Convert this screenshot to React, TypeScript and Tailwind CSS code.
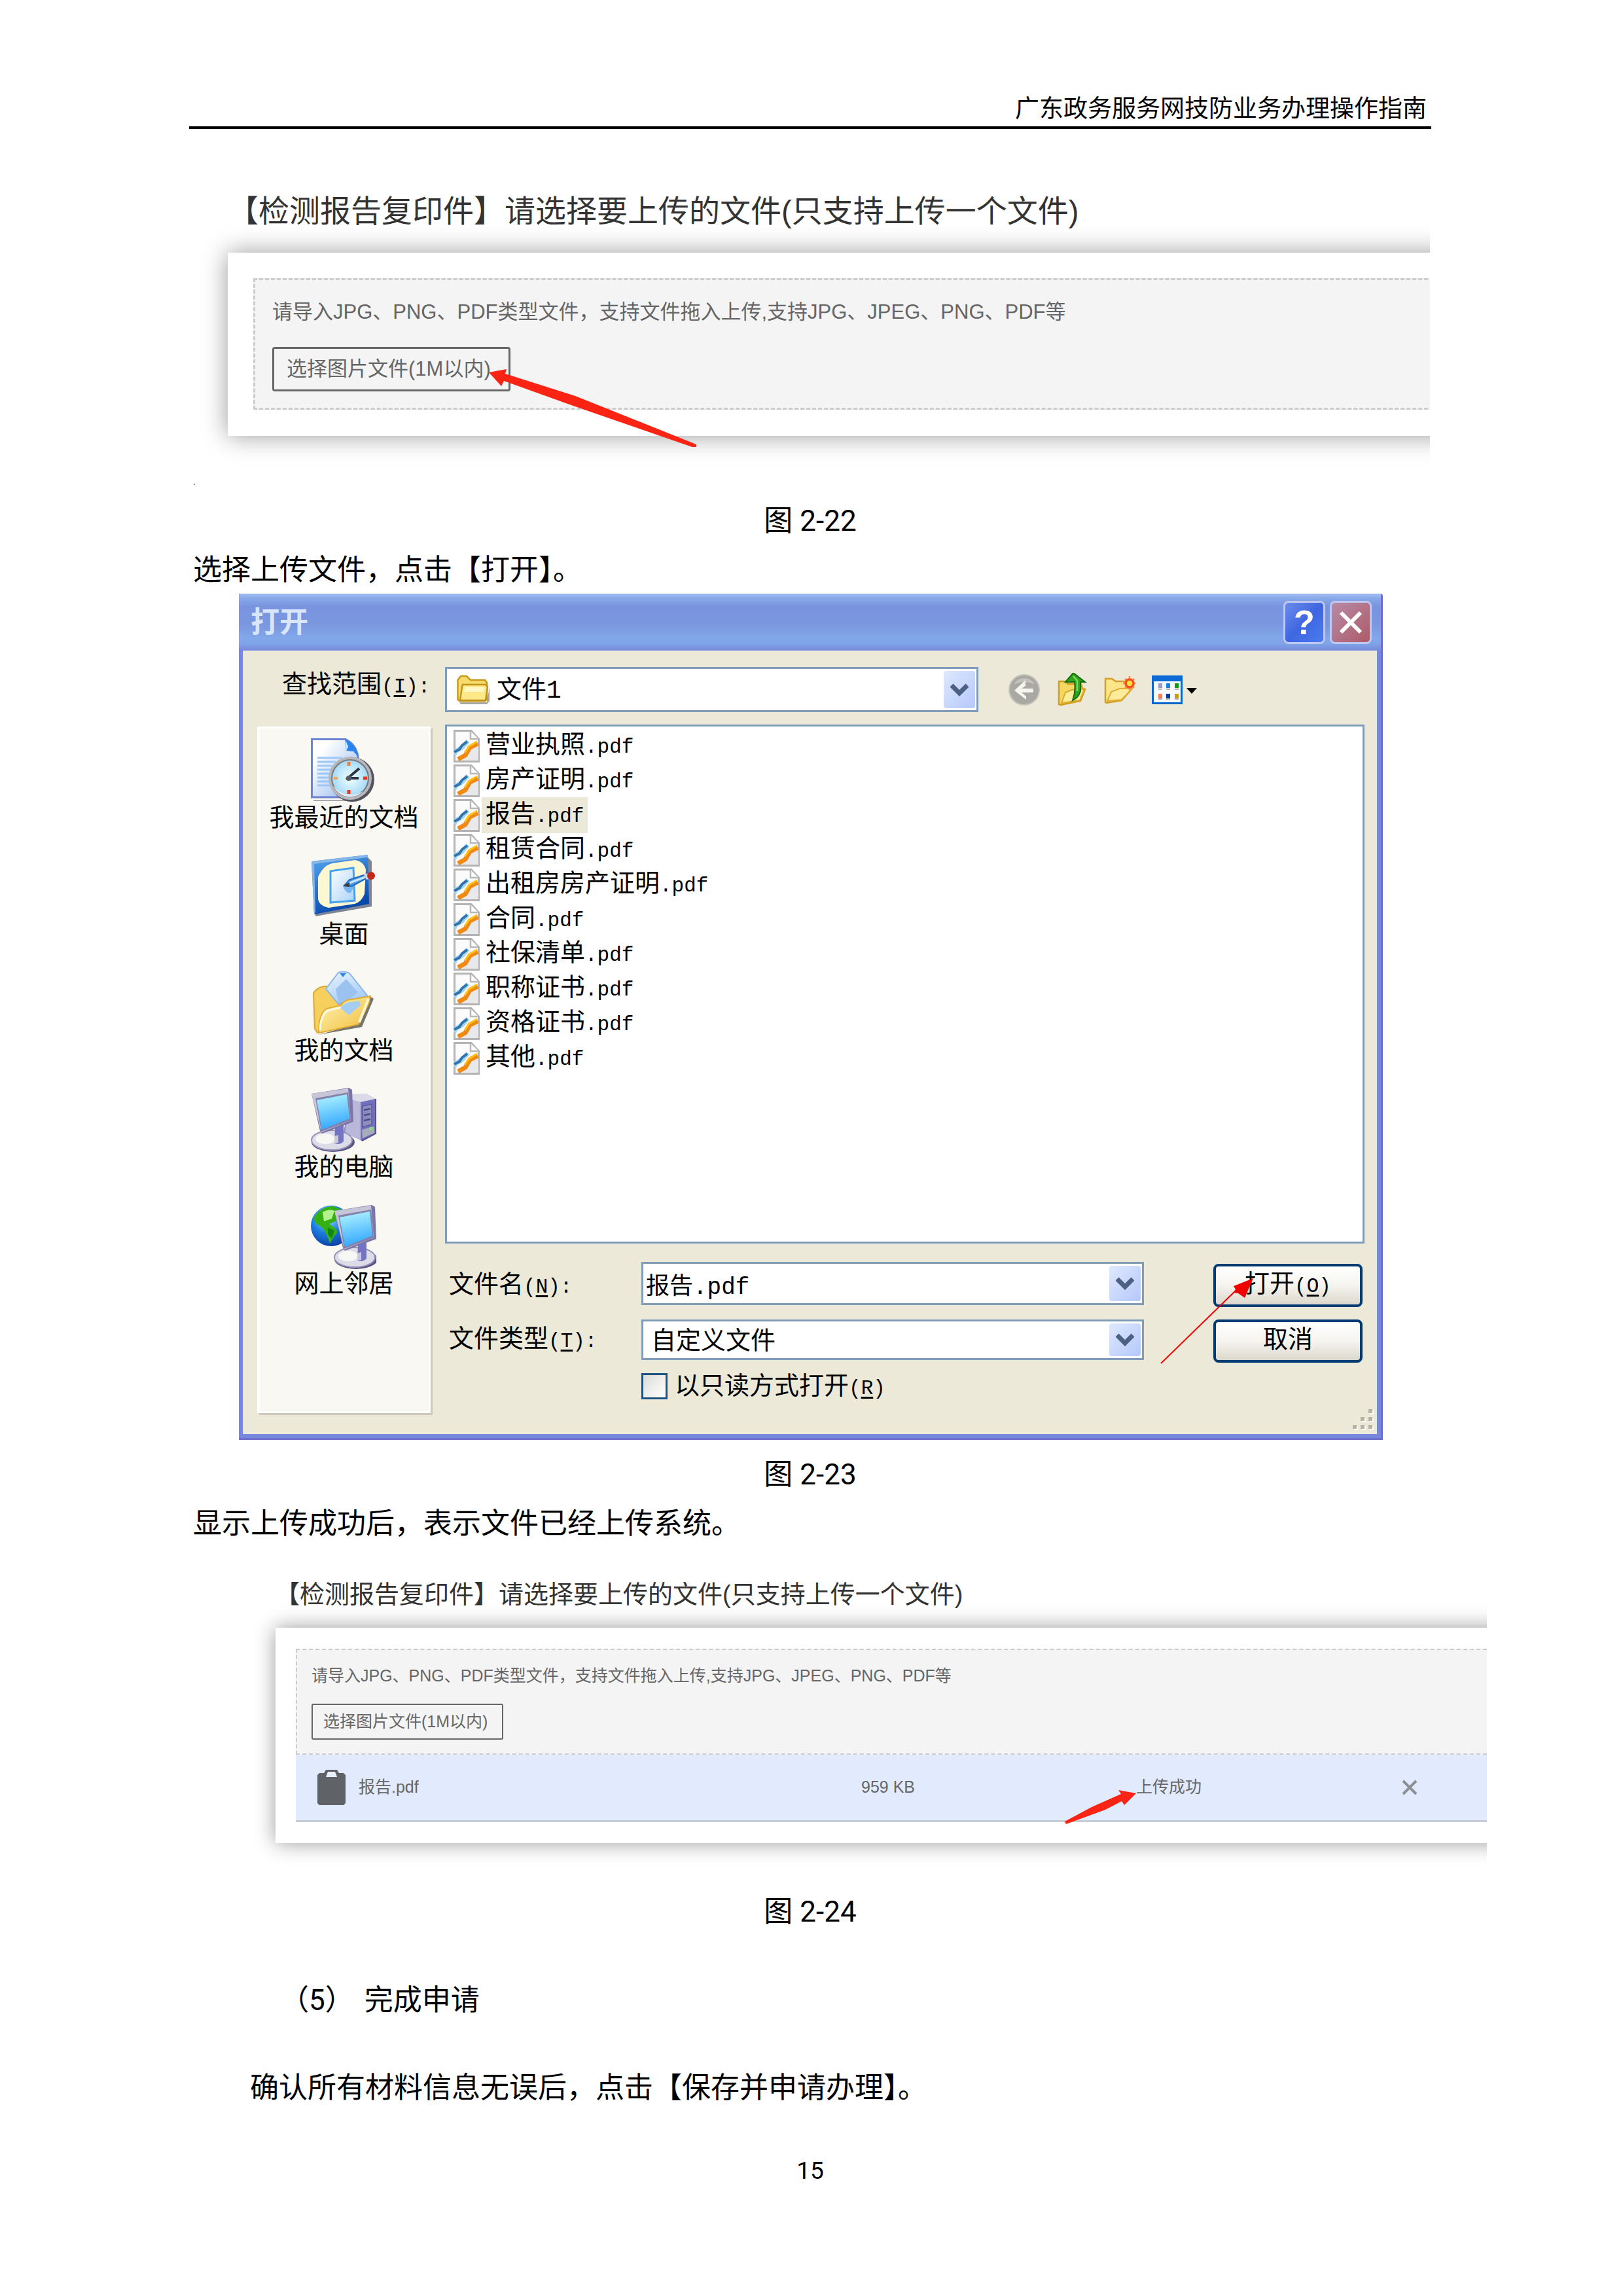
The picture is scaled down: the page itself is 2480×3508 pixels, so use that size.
import type { ReactNode } from "react";

const FILES = ["营业执照", "房产证明", "报告", "租赁合同", "出租房房产证明", "合同", "社保清单", "职称证书", "资格证书", "其他"];

function PdfIcon() {
  return (
    <svg viewBox="0 0 40 50" className="h-[50px] w-[40px] shrink-0" aria-hidden="true">
      <path d="M1.5 1.5H27L38.5 14V48.5H1.5Z" fill="#fbfbfb" stroke="#b3b3b3" strokeWidth="3" />
      <path d="M6 44L38 22V47H6Z" fill="#e9e9ec" />
      <path d="M26 2V14H38" fill="#fff" stroke="#b8b8b8" strokeWidth="2.5" />
      <path d="M1 38L3 33L13 27L22 17" fill="none" stroke="#a8d4ee" strokeWidth="7" />
      <path d="M1 34L9 30L13 24L21 18" fill="none" stroke="#2f74ad" strokeWidth="4" />
      <path d="M7 45L18 39L25 27L37 21" fill="none" stroke="#f08a12" strokeWidth="7" />
      <path d="M17 35L24 25L36 18" fill="none" stroke="#fcc21a" strokeWidth="3" />
    </svg>
  );
}

function RecentIcon() {
  return (
    <svg viewBox="0 0 100 100" className="size-[100px]" aria-hidden="true">
      <defs>
        <linearGradient id="rdoc" x1="0" y1="0" x2="1" y2="1">
          <stop offset="0.2" stopColor="#ffffff" />
          <stop offset="1" stopColor="#8fb4ee" />
        </linearGradient>
        <radialGradient id="rface">
          <stop offset="0" stopColor="#f4ffff" />
          <stop offset="1" stopColor="#a6dbf7" />
        </radialGradient>
      </defs>
      <path d="M4 94H60L76 60V34L70 96H4Z" fill="#a9a9ad" />
      <path d="M1.5 1.5H53Q69 9 72 28V90H1.5Z" fill="url(#rdoc)" stroke="#6c84cf" strokeWidth="3" />
      <path d="M52 1Q69 8 73 29L65 20L54 19Z" fill="#2a84ee" />
      <path d="M53 3L57 13L54 19Z" fill="#d8ecff" />
      <path d="M10 30H48M10 36H38M10 42H33M10 48H30M10 54H28M10 60H28M10 66H29M10 72H32" stroke="#9cc8f8" strokeWidth="3" />
      <circle cx="63" cy="63" r="34" fill="#55545c" />
      <circle cx="60" cy="61" r="33" fill="#b6b6bd" />
      <circle cx="60" cy="61" r="29" fill="#77777f" />
      <circle cx="60" cy="61" r="27" fill="url(#rface)" />
      <path d="M34 72A28 28 0 0 0 80 81A34 34 0 0 1 34 72" fill="#e8eaf2" />
      <path d="M58 36V42" stroke="#f0803c" strokeWidth="5" />
      <path d="M35 61H41" stroke="#f2a25c" strokeWidth="4" />
      <path d="M80 61H86M58 79V85" stroke="#ea3c1c" strokeWidth="5" />
      <path d="M54 63L74 46M58 61H73" stroke="#2c3440" strokeWidth="4" />
      <circle cx="58" cy="61" r="4" fill="#555b66" />
    </svg>
  );
}

function DesktopIcon() {
  return (
    <svg viewBox="0 0 100 100" className="size-[100px]" aria-hidden="true">
      <defs>
        <linearGradient id="dblue" x1="0" y1="0" x2="0.4" y2="1">
          <stop offset="0" stopColor="#58a9f0" />
          <stop offset="1" stopColor="#0748ad" />
        </linearGradient>
        <linearGradient id="dpap" x1="0" y1="0" x2="1" y2="1">
          <stop offset="0" stopColor="#ffffff" />
          <stop offset="1" stopColor="#a9d2fa" />
        </linearGradient>
      </defs>
      <path d="M6 94L92 79L92 10L86 4L80 70L6 90Z" fill="#7d8594" />
      <path d="M0 10L86 0L88 75L4 91Z" fill="url(#dblue)" />
      <path d="M0 10L86 0V4L4 14L6 88L4 91Z" fill="#86b6e8" />
      <path d="M10 34Q18 16 32 13L66 8Q80 10 83 23L81 60Q76 72 66 75L26 81Q12 78 10 68Z" fill="#fdf7d2" />
      <path d="M29 25L64 20L66 70L29 73Z" fill="url(#dpap)" stroke="#46a2ea" strokeWidth="3" />
      <path d="M48 47Q52 60 60 58L66 46Z" fill="#74b7f2" />
      <path d="M50 47L58 38L80 31L84 36L62 48Z" fill="#4b9ae6" stroke="#246cc0" strokeWidth="2" />
      <path d="M58 43L82 34" stroke="#c9e6ff" strokeWidth="3" />
      <path d="M48 48L58 42L58 49Z" fill="#433b22" />
      <path d="M80 30L88 28L88 37L84 38Z" fill="#d3d6dc" />
      <circle cx="91" cy="32" r="6" fill="#c3281c" />
    </svg>
  );
}

function DocumentsIcon() {
  return (
    <svg viewBox="0 0 100 100" className="size-[100px]" aria-hidden="true">
      <defs>
        <linearGradient id="fyel" x1="0" y1="0" x2="1" y2="1">
          <stop offset="0" stopColor="#fff4b4" />
          <stop offset="1" stopColor="#f0bd3c" />
        </linearGradient>
        <linearGradient id="fpap" x1="0" y1="0" x2="0.5" y2="1">
          <stop offset="0" stopColor="#eaf5ff" />
          <stop offset="1" stopColor="#a6ccf6" />
        </linearGradient>
      </defs>
      <path d="M12 97L78 85L96 42L90 38L72 80Z" fill="#77746c" />
      <path d="M4 33Q12 22 24 23L44 50L60 46L40 80L10 94L6 88Z" fill="#f6cf5c" stroke="#d9a83c" strokeWidth="2" />
      <path d="M42 2Q50 -1 59 3L87 38L56 44L42 50L23 27Z" fill="url(#fpap)" stroke="#8db6e6" strokeWidth="2" />
      <path d="M44 3L54 3L49 9Z" fill="#2f86e4" />
      <path d="M38 27L54 12L72 32L58 44L42 48Z" fill="#9cc2f0" />
      <path d="M12 94Q12 64 24 57L46 52Q52 43 62 43L91 38L88 50L73 81L13 94Z" fill="url(#fyel)" stroke="#e3ad33" strokeWidth="2" />
      <path d="M14 90Q15 66 26 60L46 55" fill="none" stroke="#fffbe4" strokeWidth="3" />
      <path d="M88 42L74 78" stroke="#fff6cf" strokeWidth="4" />
      <path d="M45 56Q52 47 62 47L74 45L76 52L58 67Z" fill="#a3cdf2" />
    </svg>
  );
}

function Screen() {
  return (
    <g>
      <ellipse cx="34" cy="83" rx="33" ry="15" fill="#5b5685" />
      <ellipse cx="32" cy="80" rx="31" ry="15" fill="#dcdce8" stroke="#9794b8" strokeWidth="2" />
      <ellipse cx="22" cy="78" rx="15" ry="8" fill="#f7f7f4" />
      <path d="M37 60L50 56V82Q44 88 36 85Z" fill="#7573c4" />
      <path d="M36 74L42 72V84L36 85Z" fill="#c9c9e0" />
      <path d="M1 9L58 0L63 3L65 52L17 70L14 66Z" fill="#7a76a8" />
      <path d="M1 9L57 1L61 50L16 68Z" fill="#c6c6d8" />
      <path d="M7 16L57 7L61 50L16 67Z" fill="#8482ad" />
      <path d="M9 19L55 10L59 47L17 64Z" fill="url(#scr)" />
    </g>
  );
}

function ScreenPaint() {
  return (
    <defs>
      <linearGradient id="scr" x1="0.3" y1="0" x2="0.5" y2="1">
        <stop offset="0" stopColor="#aef2ff" />
        <stop offset="1" stopColor="#2fa5ff" />
      </linearGradient>
      <radialGradient id="sea" cx="0.4" cy="0.3" r="0.75">
        <stop offset="0" stopColor="#a6e4ff" />
        <stop offset="0.5" stopColor="#1c7ee0" />
        <stop offset="1" stopColor="#0a3aa0" />
      </radialGradient>
    </defs>
  );
}

function ComputerIcon() {
  return (
    <svg viewBox="0 0 100 100" className="size-[100px]" aria-hidden="true">
      <ScreenPaint />
      <path d="M60 11L84 9L99 17V70L78 81L50 68Z" fill="#8f8dc2" />
      <path d="M60 11L84 9L99 17L76 22L60 18Z" fill="#dadae9" />
      <path d="M60 18L76 22V80L52 69Z" fill="#b9b8da" />
      <path d="M76 22L99 17V70L78 81L76 80Z" fill="#7270bd" />
      <path d="M79 28L93 25V56L79 60Z" fill="#8f8dbb" stroke="#5b59a0" strokeWidth="1.5" />
      <path d="M81 34L91 32M81 42L91 40M81 50L91 48" stroke="#4c4a8c" strokeWidth="2.5" />
      <path d="M78 64L97 59V69L79 77Z" fill="#a8abb8" />
      <rect x="90" y="60" width="4" height="4" fill="#7cf06a" />
      <path d="M99 17V70L78 81" fill="none" stroke="#55508a" strokeWidth="2" />
      <Screen />
    </svg>
  );
}

function NetworkIcon() {
  return (
    <svg viewBox="0 0 100 100" className="size-[100px]" aria-hidden="true">
      <ScreenPaint />
      <circle cx="31" cy="33" r="31" fill="url(#sea)" />
      <path d="M5 20Q16 3 34 3L46 8L42 24L28 30L36 36Q44 42 36 48L29 60Q25 46 18 36L6 28Z" fill="#35b013" />
      <path d="M18 12Q28 6 36 10L32 22L20 26Z" fill="#b4f08e" />
      <path d="M26 36L36 40L32 52L26 46Z" fill="#128418" />
      <g transform="translate(35 1)">
        <Screen />
      </g>
    </svg>
  );
}

function FolderIcon() {
  return (
    <svg viewBox="0 0 50 46" className="h-[46px] w-[50px]" aria-hidden="true">
      <path d="M4 42H46L50 18V40L46 45H6Z" fill="#a8a8a0" />
      <path d="M1.5 38V8L6 2H15L21 8H43L46 12V38L43 40H4Z" fill="#f6dc6c" stroke="#c79a1c" strokeWidth="2.5" />
      <path d="M9 15H44L47 18L44 39H5L8 18Z" fill="#fde988" stroke="#c1921c" strokeWidth="2.5" />
      <path d="M12 19H42L41 26H11Z" fill="#fff8c6" />
    </svg>
  );
}

function BackIcon() {
  return (
    <svg viewBox="0 0 48 52" className="h-[52px] w-[48px]" aria-hidden="true">
      <circle cx="24" cy="26" r="23" fill="#a9a8a2" stroke="#c6c4bb" strokeWidth="2" />
      <path d="M8 18A18 18 0 0 1 40 18Q24 10 8 18" fill="#c3c2bc" />
      <path d="M26 11V20L20 24H38V30H20L27 36V41L9 27Z" fill="#f6f5f0" />
    </svg>
  );
}

function UpIcon() {
  return (
    <svg viewBox="0 0 48 52" className="h-[52px] w-[48px]" aria-hidden="true">
      <path d="M4 13H13L18 17H38L40 24L44 25L37 43L7 49L4 48Z" fill="#f6d762" stroke="#cf9c1e" strokeWidth="2.5" />
      <path d="M8 46L14 30L24 26L43 25L36 42Z" fill="#fdec98" stroke="#dca92a" strokeWidth="2" />
      <path d="M26 0L44 14H37V28Q34 38 25 42Q30 28 28 14H14Z" fill="#2fa31c" stroke="#14700f" strokeWidth="2" />
      <path d="M26 5L32 12V28" fill="none" stroke="#7fdc5c" strokeWidth="2.5" />
    </svg>
  );
}

function NewFolderIcon() {
  return (
    <svg viewBox="0 0 48 52" className="h-[52px] w-[48px]" aria-hidden="true">
      <path d="M2 9H12L18 13H34L36 24L42 25L27 42L4 46L2 45Z" fill="#fbe58a" stroke="#d2a02a" strokeWidth="2.5" />
      <path d="M5 43L11 29L24 24H43L27 41Z" fill="#fdec9c" stroke="#e0ae34" strokeWidth="2" />
      <path d="M39 5V27M29 16H48M32 9L46 23M46 9L32 23" stroke="#ff8a5c" strokeWidth="2.5" />
      <circle cx="39" cy="16" r="6" fill="#ffe23c" stroke="#f4511e" strokeWidth="3.5" />
    </svg>
  );
}

function ViewIcon() {
  return (
    <svg viewBox="0 0 72 52" className="h-[52px] w-[72px]" aria-hidden="true">
      <rect x="1.5" y="5.5" width="44" height="41" fill="#f6faff" stroke="#0a66cc" strokeWidth="3" />
      <rect x="0" y="4" width="47" height="9" fill="#0b6ad6" />
      <rect x="10" y="16" width="6" height="7" fill="#9a9ad6" />
      <rect x="22" y="16" width="6" height="7" fill="#1580e0" />
      <rect x="35" y="16" width="6" height="7" fill="#0f9a12" />
      <rect x="10" y="32" width="6" height="7" fill="#ff7d50" />
      <rect x="22" y="32" width="6" height="7" fill="#0c369c" />
      <rect x="35" y="32" width="6" height="7" fill="#c99a10" />
      <path d="M10 25H16M22 25H28M35 25H41M10 40H16M22 40H28M35 40H41" stroke="#b4b4b4" strokeWidth="2" />
      <path d="M53 23H69L61 32Z" fill="#000" />
    </svg>
  );
}

function Chevron() {
  return (
    <span className="pointer-events-none absolute inset-y-[6px] right-[5px] flex w-[48px] items-center justify-center rounded-[4px] bg-linear-to-br from-[#dfe8fe] to-[#b4c8fa]">
      <svg viewBox="0 0 28 20" className="h-[20px] w-[28px]" aria-hidden="true">
        <path d="M2 3L14 15L26 3" fill="none" stroke="#4d6185" strokeWidth="7" />
      </svg>
    </span>
  );
}

function Key({ children }: { children: string }) {
  return (
    <span className="text-[31px]">
      (<u className="decoration-[3px] underline-offset-4">{children}</u>)
    </span>
  );
}

function Para({ children, className }: { children: ReactNode; className: string }) {
  return <p className={`text-[44px] leading-[64px] ${className}`}>{children}</p>;
}

const HINT = "请导入JPG、PNG、PDF类型文件，支持文件拖入上传,支持JPG、JPEG、PNG、PDF等";
const TITLE = "【检测报告复印件】请选择要上传的文件(只支持上传一个文件)";

function UploadFigure() {
  return (
    <figure className="mr-[2px] overflow-hidden pt-[96px] pb-[58px] font-['Liberation_Sans','Noto_Sans_CJK_SC',sans-serif]">
      <h2 className="pl-[59px] text-[47px] leading-[60px] text-[#333]">{TITLE}</h2>
      <div className="relative mt-[33px] -mr-[60px] ml-[59px] bg-white pt-[39px] pb-[40px] pl-[39px] shadow-[0_0_36px_rgba(0,0,0,0.4)]">
        <div className="border-[3px] border-dashed border-[#ccc] bg-[#f4f4f4] pt-[28px] pb-[25px] pl-[26px] text-[31px] text-[#666]">
          <p className="leading-[42px]">{HINT}</p>
          <button type="button" className="mt-[32px] flex h-[68px] items-center rounded-[4px] border-[3px] border-[#666] pr-[27px] pl-[19px]">
            选择图片文件(1M以内)
          </button>
        </div>
        <svg viewBox="0 0 320 124" className="pointer-events-none absolute top-[176px] left-[398px] h-[124px] w-[320px]" aria-hidden="true">
          <path d="M1 7L28 2L26 9L133 43L318 117V121H312L127 57L24 20L20 28Z" fill="#fb2313" />
        </svg>
      </div>
    </figure>
  );
}

function ResultFigure() {
  return (
    <figure className="-mr-[85px] overflow-hidden pt-[51px] pb-[43px] font-['Liberation_Sans','Noto_Sans_CJK_SC',sans-serif]">
      <h2 className="pl-[131px] text-[38px] leading-[50px] text-[#333]">{TITLE}</h2>
      <div className="mt-[26px] -mr-[60px] ml-[132px] bg-white pt-[32px] pb-[32px] pl-[31px] shadow-[0_0_30px_rgba(0,0,0,0.4)]">
        <div className="border-2 border-dashed border-[#ccc] bg-[#f4f4f4] pt-[24px] pb-[21px] pl-[22px] text-[25px] text-[#666]">
          <p className="leading-[30px]">{HINT}</p>
          <button type="button" className="mt-[28px] flex h-[55px] items-center rounded-[3px] border-2 border-[#666] pr-[22px] pl-[16px]">
            选择图片文件(1M以内)
          </button>
        </div>
        <ul>
          <li className="relative grid h-[103px] grid-cols-[864fr_420fr_406fr_190fr] items-center border-b-[3px] border-[#c8ccd4] bg-[#e1ebfd] text-[25px] text-[#666]">
            <span className="flex items-center gap-[20px] pl-[33px]">
              <svg viewBox="0 0 43 54" className="h-[54px] w-[43px]" aria-hidden="true">
                <path d="M3 5H10L13 0H30L33 5H40L43 8V51L40 54H3L0 51V8Z" fill="#5f6267" />
                <path d="M16 3H27L30 11H13Z" fill="#e8effc" />
              </svg>
              报告.pdf
            </span>
            <span>959 KB</span>
            <span>上传成功</span>
            <button type="button" aria-label="删除" className="flex">
              <svg viewBox="0 0 24 24" className="size-[24px]" aria-hidden="true">
                <path d="M2 2L22 22M22 2L2 22" stroke="#8c8f94" strokeWidth="4" />
              </svg>
            </button>
            <svg viewBox="0 0 112 56" className="pointer-events-none absolute top-[52px] left-[1174px] h-[56px] w-[112px]" aria-hidden="true">
              <path d="M110 7L83 2L87 8L42 28L1 50L3 54L63 32L88 19L92 25Z" fill="#fb2313" />
            </svg>
          </li>
        </ul>
      </div>
    </figure>
  );
}

function Place({ icon, label }: { icon: ReactNode; label: string }) {
  return (
    <button type="button" className="flex flex-col items-center leading-[48px]">
      {icon}
      {label}
    </button>
  );
}

const XP_BUTTON =
  "flex items-center justify-center rounded-[8px] border-[4px] border-[#003c74] bg-linear-to-b from-white via-[#f5f4ef] to-[#dcd8cd] pb-[2px]";
const XP_FIELD = "w-full border-[3px] border-[#7f9db9] bg-white";

function OpenDialog() {
  return (
    <section
      role="dialog"
      aria-label="打开"
      className="mt-[4px] mr-[74px] ml-[76px] rounded-t-[4px] bg-[#6d6fce] pr-[3px] pb-[3px] font-['Liberation_Mono','Noto_Sans_CJK_SC',monospace] text-[38px] text-black"
    >
      <div className="bg-[#7688dc] pb-[6px]">
        <div className="flex h-[87px] items-center gap-[7px] rounded-tl-[4px] bg-[linear-gradient(#a3bdf0_0%,#88aae8_8%,#7a94df_22%,#7b97e0_55%,#82a8e9_78%,#80a4e8_88%,#7688dc_100%)] pr-[14px] pl-[18px]">
          <h2 className="flex-1 pt-[6px] text-[44px] leading-[60px] font-bold text-[#d8e5fa]">打开</h2>
          <button
            type="button"
            aria-label="帮助"
            className="flex h-[66px] w-[64px] items-center justify-center rounded-[8px] border-[3px] border-[#bcc8f1] bg-linear-to-br from-[#6c8cec] via-[#3f66e0] to-[#4a7cf0] font-['Liberation_Sans',sans-serif] text-[52px] leading-none font-bold text-white"
          >
            ?
          </button>
          <button
            type="button"
            aria-label="关闭"
            className="flex h-[66px] w-[64px] items-center justify-center rounded-[8px] border-[3px] border-[#bcc8f1] bg-linear-to-br from-[#b68aa6] to-[#ae5a68]"
          >
            <svg viewBox="0 0 36 36" className="size-[36px]" aria-hidden="true">
              <path d="M3 3L33 33M33 3L3 33" stroke="#fff" strokeWidth="6" />
            </svg>
          </button>
        </div>

        <div className="mr-[6px] ml-[6px] bg-[#ece9d8] pt-[25px] pr-[19px] pb-[32px] pl-[22px]">
          <div className="flex items-start">
            <label htmlFor="folder" className="w-[287px] shrink-0 pl-[38px] leading-[58px]">
              查找范围
              <Key>I</Key>
              <span className="text-[31px]">:</span>
            </label>
            <div className="relative h-[69px] w-[815px]">
              <select id="folder" className={`${XP_FIELD} h-full appearance-none pt-[3px] pl-[76px]`}>
                <option>文件1</option>
              </select>
              <span className="pointer-events-none absolute inset-y-0 left-[18px] flex items-center">
                <FolderIcon />
              </span>
              <Chevron />
            </div>
            <div className="ml-[46px] flex h-[69px] items-center gap-[25px]">
              <button type="button" aria-label="后退"><BackIcon /></button>
              <button type="button" aria-label="向上一级"><UpIcon /></button>
              <button type="button" aria-label="新建文件夹"><NewFolderIcon /></button>
              <button type="button" aria-label="查看"><ViewIcon /></button>
            </div>
          </div>

          <div className="mt-[19px] flex gap-[22px]">
            <nav className="mt-[3px] flex w-[265px] shrink-0 flex-col items-center gap-[30px] border-[3px] border-white bg-[#f9f8f3] pt-[15px] shadow-[3px_3px_0_#ccc9b8]">
              <Place icon={<RecentIcon />} label="我最近的文档" />
              <Place icon={<DesktopIcon />} label="桌面" />
              <Place icon={<DocumentsIcon />} label="我的文档" />
              <Place icon={<ComputerIcon />} label="我的电脑" />
              <Place icon={<NetworkIcon />} label="网上邻居" />
            </nav>

            <div className="flex-1">
              <ul className="min-h-[793px] border-[3px] border-[#7f9db9] bg-white pt-[3px] pl-[10px]">
                {FILES.map((name) => (
                  <li key={name} className="flex h-[53px] items-center gap-[3px]">
                    <PdfIcon />
                    <span className={name === "报告" ? "bg-[#ece9d8] px-[6px] pt-[2px] leading-[51px]" : "px-[6px] pt-[2px] leading-[51px]"}>
                      {name}
                      <span className="text-[31px]">.pdf</span>
                    </span>
                  </li>
                ))}
              </ul>

              <div className="mt-[28px] flex pr-[3px] pb-[21px]">
                <div className="flex-1">
                  <div className="flex items-center">
                    <label htmlFor="filename" className="w-[300px] pt-[6px] pl-[6px]">
                      文件名
                      <Key>N</Key>
                      <span className="text-[31px]">:</span>
                    </label>
                    <div className="relative h-[66px] flex-1">
                      <input id="filename" type="text" defaultValue="报告.pdf" className={`${XP_FIELD} h-full pl-[4px] text-[36px]`} />
                      <Chevron />
                    </div>
                  </div>
                  <div className="mt-[22px] flex items-center">
                    <label htmlFor="filetype" className="w-[300px] pl-[6px]">
                      文件类型
                      <Key>T</Key>
                      <span className="text-[31px]">:</span>
                    </label>
                    <div className="relative h-[62px] flex-1">
                      <select id="filetype" className={`${XP_FIELD} h-full appearance-none pt-[3px] pl-[12px]`}>
                        <option>自定义文件</option>
                      </select>
                      <Chevron />
                    </div>
                  </div>
                  <div className="mt-[19px] ml-[300px] flex h-[41px] items-center gap-[11px]">
                    <input
                      id="readonly"
                      type="checkbox"
                      className="size-[40px] appearance-none border-[3px] border-[#1c5180] bg-linear-to-br from-[#dcdcd7] to-white"
                    />
                    <label htmlFor="readonly" className="pt-[3px]">
                      以只读方式打开
                      <Key>R</Key>
                    </label>
                  </div>
                </div>
                <div className="relative ml-[106px] flex w-[228px] flex-col gap-[19px] pt-[3px]">
                  <button type="button" className={`${XP_BUTTON} h-[66px]`}>
                    <span>
                      打开
                      <Key>O</Key>
                    </span>
                  </button>
                  <button type="button" className={`${XP_BUTTON} h-[66px]`}>
                    取消
                  </button>
                  <svg viewBox="0 0 146 136" className="pointer-events-none absolute top-[22px] left-[-82px] h-[136px] w-[146px]" aria-hidden="true">
                    <path d="M2 133L114 24" stroke="#f00000" strokeWidth="2" />
                    <path d="M143 3L113 15L116 20L112 25L120 26L130 33Z" fill="#f00000" />
                  </svg>
                </div>
              </div>
            </div>
          </div>
          <div className="relative">
            <svg viewBox="0 0 36 36" className="absolute top-[-6px] right-[-17px] size-[36px]" aria-hidden="true">
              <path d="M27 5H33M15 17H21M27 17H33M3 29H9M15 29H21M27 29H33" stroke="#fff" strokeWidth="6" />
              <path d="M25 3H31M13 15H19M25 15H31M1 27H7M13 27H19M25 27H31" stroke="#b8b4a2" strokeWidth="6" />
            </svg>
          </div>
        </div>
      </div>
    </section>
  );
}

export default function App() {
  return (
    <main
      lang="zh-CN"
      className="min-h-screen bg-white pt-[144px] pr-[293px] pb-[162px] pl-[289px] font-['Roboto','Noto_Sans_CJK_SC',sans-serif] text-black"
    >
      <header className="border-b-[4px] border-black pr-[7px] pb-[3px] text-right text-[37px] leading-[46px]">
        广东政务服务网技防业务办理操作指南
      </header>

      <UploadFigure />
      <p className="pl-[6px] text-[16px] leading-[24px] text-gray-600">.</p>
      <Para className="mt-[16px] text-center">图 2-22</Para>
      <Para className="mt-[11px] pl-[6px]">选择上传文件，点击【打开】。</Para>

      <OpenDialog />
      <Para className="mt-[21px] text-center">图 2-23</Para>
      <Para className="mt-[11px] pl-[6px]">显示上传成功后，表示文件已经上传系统。</Para>

      <ResultFigure />
      <Para className="mt-[30px] text-center">图 2-24</Para>
      <Para className="mt-[71px] flex gap-[16px] pl-[139px]">
        <span>（5）</span>
        <span>完成申请</span>
      </Para>
      <Para className="mt-[70px] pl-[93px]">确认所有材料信息无误后，点击【保存并申请办理】。</Para>
      <footer className="mt-[68px] text-center text-[37px] leading-[54px]">15</footer>
    </main>
  );
}
